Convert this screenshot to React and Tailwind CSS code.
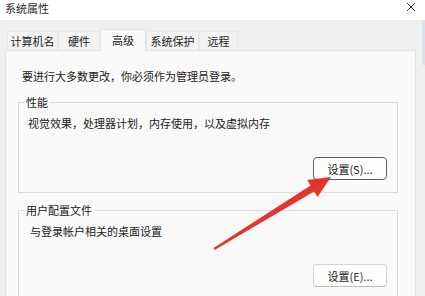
import React from "react";

const font = { fontFamily: '"Noto Sans CJK SC", "Noto Sans", sans-serif' };

function Tab({ label, selected, w }) {
  if (selected) {
    return (
      <div
        className={`h-[22px] -mb-[1px] relative z-10 bg-[#f9f9f9] border border-b-0 border-[#e4e4e4] flex items-start justify-center pt-[3px] ${w}`}
      >
        <span className="leading-[14px]">{label}</span>
      </div>
    );
  }
  return (
    <div
      className={`h-[19px] bg-[#f3f3f3] border border-b-0 border-[#e8e8e8] flex items-center justify-center ${w}`}
    >
      <span className="leading-[14px]">{label}</span>
    </div>
  );
}

function Button({ label, focused }) {
  return (
    <button
      className={`w-[74px] h-[23px] rounded-[4px] bg-[#fdfdfd] text-[11px] leading-[14px] text-[#222] flex items-center justify-center ${
        focused
          ? "border border-[#4e6373]"
          : "border border-[#d4d4d4] border-b-[#bcbcbc]"
      }`}
      style={font}
    >
      {label}
    </button>
  );
}

export default function App() {
  return (
    <div
      className="w-[425px] h-[296px] overflow-hidden relative bg-[#f0f0f0] text-[11px] text-[#222]"
      style={font}
    >
      {/* title bar */}
      <div className="h-[20px] bg-white flex items-start justify-between pl-[5px] pr-[9px]">
        <span className="leading-[14px] mt-[1px] text-[#2a2a2a]">系统属性</span>
        <svg width="10" height="10" viewBox="0 0 10 10" className="mt-[2px]">
          <path d="M1 1 L9 9 M9 1 L1 9" stroke="#333" strokeWidth="1" />
        </svg>
      </div>

      <div className="flex">
        <div className="w-[416px]">
          {/* tabs */}
          <div className="flex items-end pl-[7px] pt-[9px] h-[30px]">
            <Tab label="计算机名" w="w-[51px]" />
            <Tab label="硬件" w="w-[42px]" />
            <Tab label="高级" selected w="w-[46px]" />
            <Tab label="系统保护" w="w-[53px]" />
            <Tab label="远程" w="w-[39px]" />
          </div>

          {/* panel */}
          <div className="ml-[5px] w-[411px] h-[260px] border border-[#e4e4e4] bg-[#f9f9f9] pt-[18px]">
            <div className="pl-[16px] leading-[14px]">
              要进行大多数更改，你必须作为管理员登录。
            </div>

            <fieldset className="ml-[12px] mt-[12px] w-[380px] h-[98px] border border-[#dcdcdc] px-0">
              <legend className="ml-[5px] px-[2px] leading-[14px]">性能</legend>
              <div className="pl-[9px] pt-[7px] leading-[14px]">
                视觉效果，处理器计划，内存使用，以及虚拟内存
              </div>
              <div className="flex justify-end pr-[10px] mt-[27px]">
                <Button label="设置(S)..." focused />
              </div>
            </fieldset>

            <fieldset className="ml-[12px] mt-[10px] w-[380px] h-[120px] border border-[#dcdcdc] px-0">
              <legend className="ml-[5px] px-[2px] leading-[14px]">用户配置文件</legend>
              <div className="pl-[11px] pt-[7px] leading-[14px]">
                与登录帐户相关的桌面设置
              </div>
              <div className="flex justify-end pr-[10px] mt-[26px]">
                <Button label="设置(E)..." />
              </div>
            </fieldset>
          </div>
        </div>
        <div className="flex-1 flex justify-end">
          <div className="w-[3px] h-[45px] bg-[#d6e4f0]" />
        </div>
      </div>

      {/* red arrow overlay */}
      <svg
        className="absolute left-0 top-0 pointer-events-none"
        width="425"
        height="296"
        viewBox="0 0 425 296"
      >
        <polygon
          points="213.5,248.1 310.5,185.5 307.1,180 331,177 317.5,197 314.1,191.5 214.5,249.9"
          fill="#e5342c"
        />
      </svg>
    </div>
  );
}
